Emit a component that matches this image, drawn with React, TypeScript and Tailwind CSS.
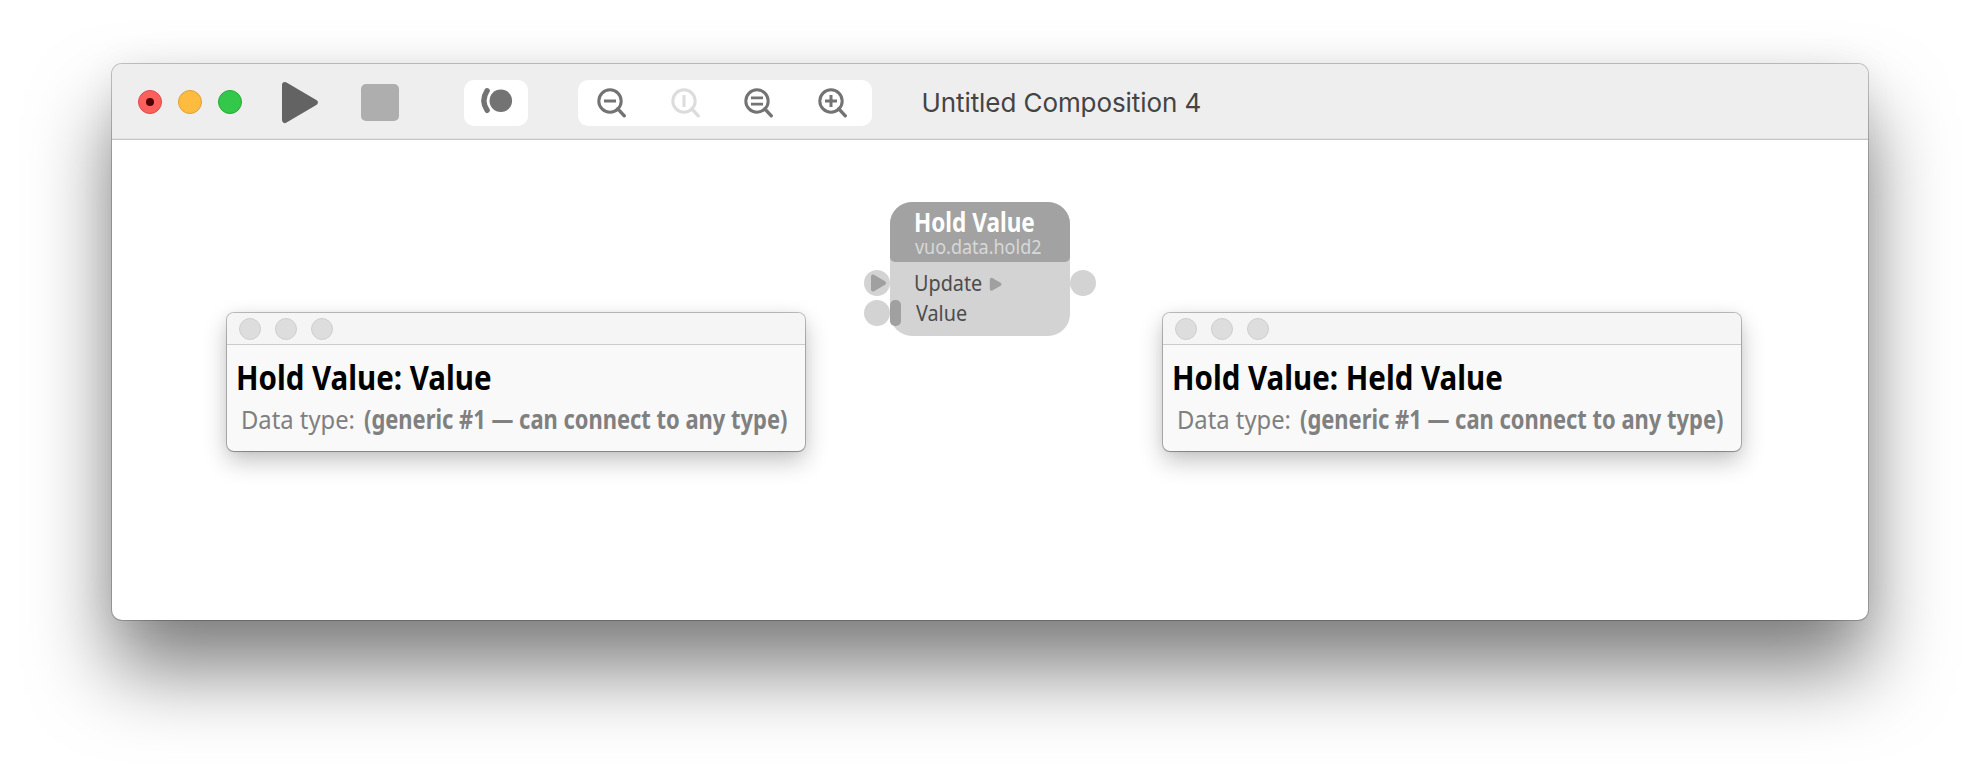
import type { ReactNode } from "react";

function Magnifier({ color, children }: { color: string; children: ReactNode }) {
  return (
    <svg className="h-[30px] w-[30px] shrink-0" viewBox="0 0 30 30" fill="none" stroke={color} strokeWidth="3">
      <circle cx="13" cy="13" r="11.2" />
      <path d="M20.8 20.8 27.3 27.8" strokeWidth="3.4" strokeLinecap="round" />
      {children}
    </svg>
  );
}

function Toolbar() {
  return (
    <header className="flex h-[76px] items-start border-b border-[#c6c6c6] bg-[#eeeeee] shadow-[inset_0_-1px_0_#e2e2e2]">
      <div className="ml-[26px] mt-[26px] flex gap-4">
        <span className="flex size-6 items-center justify-center rounded-full border border-[#e0474a] bg-[#fc605c]">
          <span className="size-2 rounded-full bg-[#4d0000]" />
        </span>
        <span className="size-6 rounded-full border border-[#dea03a] bg-[#fdbc40]" />
        <span className="size-6 rounded-full border border-[#27a934] bg-[#34c84a]" />
      </div>

      <svg className="ml-[38.6px] mt-[17px] h-11 w-10 shrink-0" viewBox="0 0 40 44">
        <path d="M4 4 33.8 21.5 4 39Z" fill="#636363" stroke="#636363" strokeWidth="6" strokeLinejoin="round" />
      </svg>
      <span className="ml-[40.4px] mt-5 h-[37px] w-[38px] rounded-[5px] bg-[#aeaeae]" />

      <span className="ml-[65px] mt-4 h-[46px] w-16 rounded-[10px] bg-white">
        <svg className="h-[46px] w-16" viewBox="0 0 64 46">
          <circle cx="36.8" cy="20.8" r="11.3" fill="#737373" />
          <path d="M23.1 10.8Q16.7 20.6 23.1 30.3" fill="none" stroke="#737373" strokeWidth="5.4" strokeLinecap="round" />
        </svg>
      </span>

      <div className="ml-[50px] mt-4 flex h-[46px] w-[294px] gap-[42.3px] rounded-[10px] bg-white pl-[19.4px] pt-2">
        <div className="flex gap-11">
          <Magnifier color="#737373">
            <path d="M7 13H19" />
          </Magnifier>
          <Magnifier color="#dcdcdc">
            <path d="M13 7V19" />
          </Magnifier>
        </div>
        <div className="flex gap-11">
          <Magnifier color="#737373">
            <path d="M7 9.8H19M7 16.2H19" strokeWidth="2.7" />
          </Magnifier>
          <Magnifier color="#737373">
            <path d="M7 13H19M13 7V19" />
          </Magnifier>
        </div>
      </div>

      <h1 className="ml-[49.5px] mt-[23px] whitespace-nowrap font-[Inter,sans-serif] text-[26px] leading-[32px] tracking-[-0.08px] text-[#444444]">
        Untitled Composition 4
      </h1>
    </header>
  );
}

function Node() {
  return (
    <div className="absolute left-[752px] top-[62px] flex">
      <div className="flex flex-col gap-1 pt-[68px]">
        <svg className="size-[26px]" viewBox="0 0 26 26">
          <circle cx="13" cy="13" r="13" fill="#d3d3d3" />
          <path d="M9 6.5 20 13 9 19.5Z" fill="#a0a0a0" stroke="#a0a0a0" strokeWidth="4" strokeLinejoin="round" />
        </svg>
        <span className="size-[26px] rounded-full bg-[#d3d3d3]" />
      </div>

      <div className="h-[134px] w-[180px] rounded-[22px] bg-[#d3d3d3]">
        <div className="h-[60px] rounded-t-[22px] rounded-b-[5px] bg-[#a2a2a2] pl-[23.5px] pt-1.5">
          <div className="w-[140px] origin-left scale-x-[0.868] whitespace-nowrap text-[26px] font-bold leading-7 text-white">
            Hold Value
          </div>
          <div className="w-[141px] origin-left scale-x-[0.9] whitespace-nowrap pl-px text-[20px] leading-[22px] text-[#d8d8d8]">
            vuo.data.hold2
          </div>
        </div>
        <div className="flex h-[35px] pl-[23.5px] pt-[5px]">
          <span className="w-[75px] origin-left scale-x-[0.9] text-[22px] leading-[30px] text-[#4c4c4c]">Update</span>
          <svg className="mt-[9px] h-4 w-[14px]" viewBox="0 0 14 16">
            <path d="M2.5 3.5 10.8 8.3 2.5 13Z" fill="#a0a0a0" stroke="#a0a0a0" strokeWidth="3.4" strokeLinejoin="round" />
          </svg>
        </div>
        <div className="flex h-[30px]">
          <span className="mt-[3px] h-[26px] w-[11px] rounded-[5px] bg-[#a0a0a0]" />
          <span className="ml-[15px] origin-left scale-x-[0.9] text-[22px] leading-[30px] text-[#4c4c4c]">Value</span>
        </div>
      </div>

      <span className="mt-[68px] size-[26px] rounded-full bg-[#d3d3d3]" />
    </div>
  );
}

function PortPopover({ title, className }: { title: string; className: string }) {
  return (
    <section
      className={`absolute top-[173px] h-[138px] w-[578px] rounded-[7px] bg-[#f9f9f9] shadow-[0_0_0_1px_rgba(0,0,0,0.24),0_1px_1px_rgba(0,0,0,0.15),0_10px_24px_rgba(0,0,0,0.24),0_0_12px_rgba(0,0,0,0.05)] ${className}`}
    >
      <div className="flex h-8 items-start gap-[14px] rounded-t-[7px] border-b border-[#cbcbcb] bg-[#f5f5f5] pl-3 pt-[5px]">
        <span className="size-[22px] rounded-full border border-[#cfcfcf] bg-[#dddddd]" />
        <span className="size-[22px] rounded-full border border-[#cfcfcf] bg-[#dddddd]" />
        <span className="size-[22px] rounded-full border border-[#cfcfcf] bg-[#dddddd]" />
      </div>
      <h2 className="ml-[8.9px] mt-3 w-max origin-left scale-x-[0.867] whitespace-nowrap text-[34px] font-bold leading-10 text-black">
        {title}
      </h2>
      <div className="ml-[13.7px] mt-1.5 flex whitespace-nowrap text-[26px] leading-8 text-[#808080]">
        <span className="w-[123.6px] shrink-0 origin-left scale-x-[0.915]">Data type:</span>
        <span className="shrink-0 origin-left scale-x-[0.843] font-bold">(generic #1 — can connect to any type)</span>
      </div>
    </section>
  );
}

export default function App() {
  return (
    <div className="h-[780px] w-[1980px] overflow-hidden bg-white pl-[112px] pt-16 font-['Noto_Sans',sans-serif]">
      <main className="h-[556px] w-[1756px] rounded-[10px] bg-white shadow-[0_0_0_1px_rgba(0,0,0,0.22),0_50px_80px_rgba(0,0,0,0.5),0_0_36px_rgba(0,0,0,0.06)]">
        <div className="overflow-hidden rounded-t-[10px]">
          <Toolbar />
        </div>
        <div className="relative h-[480px]">
          <PortPopover title="Hold Value: Value" className="left-[115px]" />
          <Node />
          <PortPopover title="Hold Value: Held Value" className="left-[1051px]" />
        </div>
      </main>
    </div>
  );
}
